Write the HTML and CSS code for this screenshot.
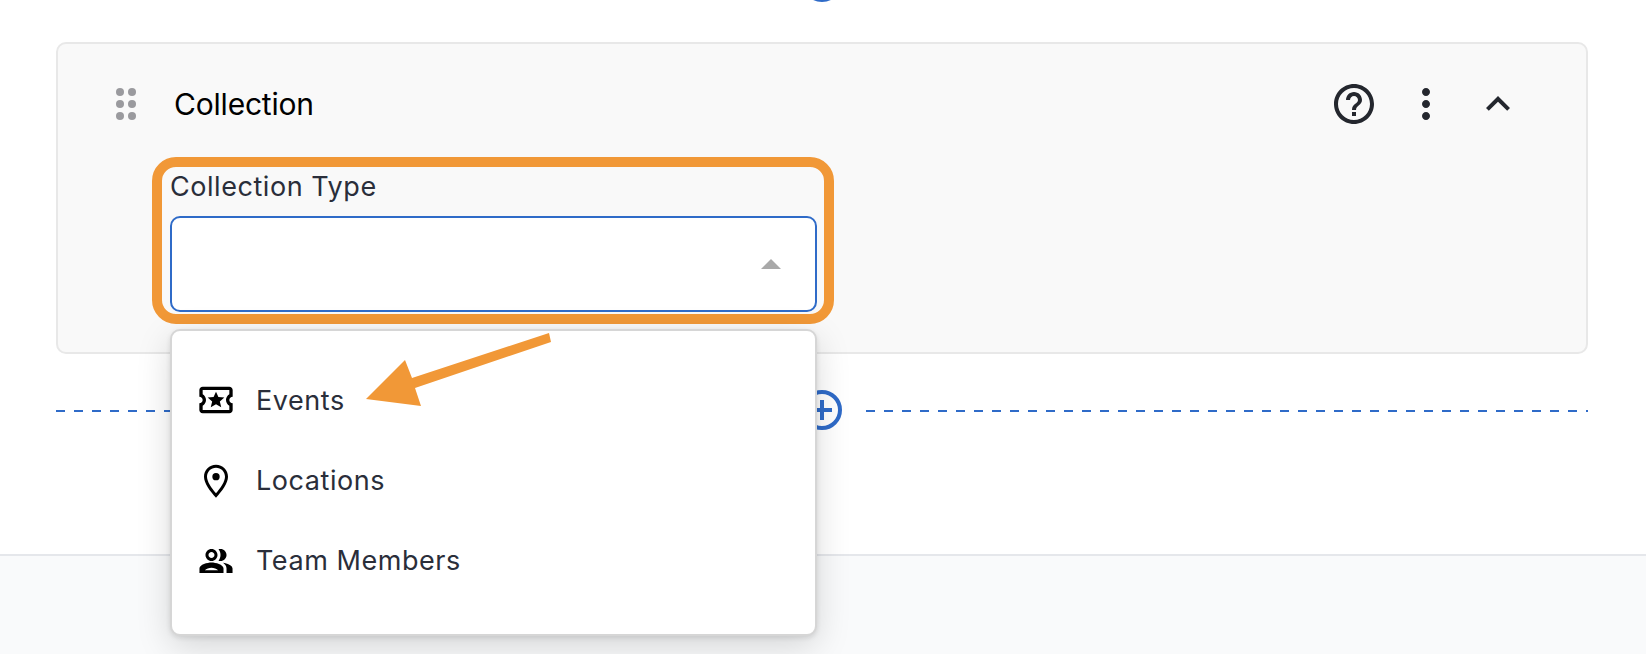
FILE: index.html
```html
<!DOCTYPE html>
<html lang="en">
<head>
    <meta charset="UTF-8">
    <meta name="viewport" content="width=device-width, initial-scale=1.0">
    <link rel="stylesheet" href="styles.css">
    <title>Collection block</title>
</head>
<body>
    <main class="editor">
      <!--add block, cut off by the top of the window-->
      <div class="add-row add-row-top">
        <svg class="add-icon" viewBox="0 0 40 40"><circle cx="20" cy="20" r="18" /><path d="M20 10v20M10 20h20" /></svg>
      </div>

      <section class="card">
        <header class="card-head">
          <div class="drag">
            <span></span><span></span><span></span><span></span><span></span><span></span>
          </div>
          <h2 class="card-title">Collection</h2>
          <div class="card-tools">
            <svg class="tool" viewBox="0 0 24 24"><path d="M11 18h2v-2h-2v2zm1-16C6.48 2 2 6.48 2 12s4.48 10 10 10 10-4.48 10-10S17.52 2 12 2zm0 18c-4.41 0-8-3.59-8-8s3.59-8 8-8 8 3.59 8 8-3.59 8-8 8zm0-14c-2.21 0-4 1.79-4 4h2c0-1.1.9-2 2-2s2 .9 2 2c0 2-3 1.75-3 5h2c0-2.25 3-2.5 3-5 0-2.21-1.79-4-4-4z" /></svg>
            <svg class="tool" viewBox="0 0 24 24"><path d="M12 8c1.1 0 2-.9 2-2s-.9-2-2-2-2 .9-2 2 .9 2 2 2zm0 2c-1.1 0-2 .9-2 2s.9 2 2 2 2-.9 2-2-.9-2-2-2zm0 6c-1.1 0-2 .9-2 2s.9 2 2 2 2-.9 2-2-.9-2-2-2z" /></svg>
            <svg class="tool" viewBox="0 0 24 24"><path d="M12 8l-6 6 1.41 1.41L12 10.83l4.59 4.58L18 14z" /></svg>
          </div>
        </header>

        <div class="field">
          <label class="field-label">Collection Type</label>
          <div class="select">
            <span class="select-caret"></span>
          </div>

          <ul class="menu">
            <li class="menu-item">
              <svg class="menu-icon" viewBox="0 0 24 24"><path d="M20 12c0-1.1.9-2 2-2V6c0-1.1-.9-2-2-2H4c-1.1 0-1.99.9-1.99 2v4c1.1 0 1.99.9 1.99 2s-.89 2-2 2v4c0 1.1.9 2 2 2h16c1.1 0 2-.9 2-2v-4c-1.1 0-2-.9-2-2zm0-3.46c-1.19.69-2 1.99-2 3.46s.81 2.77 2 3.46V18H4v-2.54c1.19-.69 2-1.99 2-3.46 0-1.48-.8-2.77-1.99-3.46L4 6h16v2.54z" /><path d="M12 7l1.45 3.2 3.55.3-2.7 2.35.85 3.45L12 14.5l-3.15 1.8.85-3.45L7 10.5l3.55-.3z" /></svg>
              Events
            </li>
            <li class="menu-item">
              <svg class="menu-icon" viewBox="0 0 24 24"><path fill-rule="evenodd" d="M12 2.2c4 0 7.2 3.1 7.2 7.2 0 3.9-3.6 8.6-7.2 12.6-3.6-4-7.2-8.7-7.2-12.6C4.8 5.3 8 2.2 12 2.2zm0 1.8c-3 0-5.4 2.3-5.4 5.4 0 2.9 2.6 6.6 5.4 9.9 2.8-3.3 5.4-7 5.4-9.9C17.4 6.3 15 4 12 4z" /><circle cx="12" cy="9.4" r="2.2" /></svg>
              Locations
            </li>
            <li class="menu-item">
              <svg class="menu-icon" viewBox="-1.3 -1.3 26.6 26.6"><path d="M16.67 13.13C18.04 14.06 19 15.32 19 17v3h4v-3c0-2.18-3.57-3.47-6.33-3.87zM15 12c2.21 0 4-1.79 4-4s-1.79-4-4-4c-.47 0-.91.1-1.33.24C14.5 5.27 15 6.58 15 8s-.5 2.73-1.33 3.76c.42.14.86.24 1.33.24zM9 12c2.21 0 4-1.79 4-4s-1.79-4-4-4-4 1.79-4 4 1.79 4 4 4zm0-6c1.1 0 2 .9 2 2s-.9 2-2 2-2-.9-2-2 .9-2 2-2zM9 13c-2.67 0-8 1.34-8 4v3h16v-3c0-2.66-5.33-4-8-4zm4.4 5.2H4.6c.9-.9 2.8-1.7 4.4-1.7s3.5.8 4.4 1.7z" /></svg>
              Team Members
            </li>
          </ul>
        </div>
      </section>

      <div class="add-row">
        <svg class="add-icon" viewBox="0 0 40 40"><circle cx="20" cy="20" r="18" /><path d="M20 10v20M10 20h20" /></svg>
      </div>

      <!--annotation arrow drawn over the menu-->
      <svg class="arrow" viewBox="0 0 200 90"><polygon points="6,69 45,30 52,48 189,3 191,12 55,58 61,76" /></svg>
    </main>
    <footer class="footer"></footer>
</body>
</html>
```

FILE: styles.css
```css
html, body {
  height: 100%;
}

body {
  margin: 0;
  display: flex;
  flex-direction: column;
  overflow: hidden;
  background: #fff;
  font-family: Inter, "Liberation Sans", sans-serif;
}

.editor {
  position: relative;
  height: 554px;
  padding: 0 58px 0 56px;
}

.footer {
  flex: 1;
  border-top: 2px solid #e5e7eb;
  background: #f9fafb;
}

/* dashed divider with the plus button */
.add-row {
  display: flex;
  justify-content: center;
  align-items: center;
  height: 40px;
  margin-top: 36px;
  background: repeating-linear-gradient(to right, #2f6bc8 0 9px, transparent 9px 18px) left 20px / 100% 2px no-repeat;
}

.add-row-top {
  margin-top: -38px;
  margin-bottom: 40px;
}

.add-icon {
  box-sizing: content-box;
  width: 40px;
  height: 40px;
  padding: 0 18px;
  background: #fff;
  fill: none;
  stroke: #2f6bc8;
  stroke-width: 4;
}

.card {
  box-sizing: border-box;
  height: 312px;
  padding: 36px 64px 28px 58px;
  border: 2px solid #e8e8e8;
  border-radius: 10px;
  background: #f9f9f9;
}

.card-head {
  display: flex;
  align-items: center;
  height: 48px;
}

.drag {
  display: grid;
  grid-template-columns: 8px 8px;
  gap: 4px;
}

.drag span {
  width: 8px;
  height: 8px;
  border-radius: 50%;
  background: #9a9a9e;
}

.card-title {
  margin: 0 0 0 38px;
  font-size: 30px;
  font-weight: 400;
  letter-spacing: -0.2px;
  color: #000;
}

.card-tools {
  display: flex;
  gap: 24px;
  margin-left: auto;
}

.tool {
  width: 48px;
  height: 48px;
  fill: #24272e;
}

/* orange outline comes from the annotation on the screenshot */
.field {
  position: relative;
  box-sizing: border-box;
  width: 682px;
  margin: 29px 0 0 36px;
  padding: 0 7px 2px 8px;
  border: 10px solid #f19837;
  border-radius: 24px;
}

.field-label {
  display: block;
  height: 38px;
  margin-bottom: 11px;
  font-size: 27px;
  line-height: 40px;
  letter-spacing: 0.55px;
  color: #2a2e3a;
}

.select {
  box-sizing: border-box;
  display: flex;
  justify-content: flex-end;
  align-items: center;
  height: 96px;
  padding-right: 34px;
  border: 2px solid #2f6bc8;
  border-radius: 10px;
  background: #fff;
}

.select-caret {
  border-left: 10px solid transparent;
  border-right: 10px solid transparent;
  border-bottom: 10px solid #a9a9a9;
}

.menu {
  position: absolute;
  z-index: 2;
  top: calc(100% + 15px);
  left: 8px;
  right: 7px;
  margin: 0;
  padding: 29px 0 33px;
  list-style: none;
  border: 2px solid #d6d6d6;
  border-radius: 10px;
  background: #fff;
  box-shadow: 0 2px 5px rgba(0, 0, 0, .1), 0 10px 34px rgba(0, 0, 0, .15);
}

.menu-item {
  display: flex;
  align-items: center;
  height: 80.4px;
  padding-left: 24px;
  font-size: 27px;
  letter-spacing: 0.55px;
  color: #2a2e3a;
}

.menu-icon {
  width: 40px;
  height: 40px;
  margin-right: 20px;
  fill: #000;
}

.arrow {
  position: absolute;
  z-index: 3;
  left: 360px;
  top: 330px;
  width: 200px;
  height: 90px;
  fill: #f19837;
}
```
